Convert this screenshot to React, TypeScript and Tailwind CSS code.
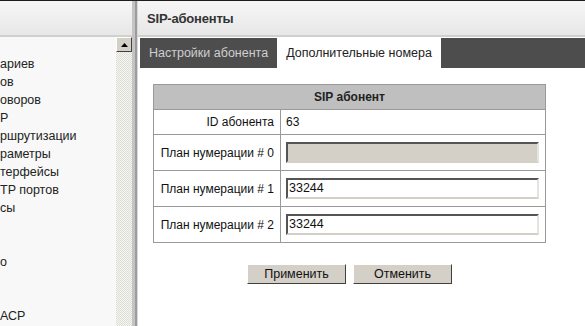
import React from 'react'

const menuItems = [
  'ариев',
  'ов',
  'оворов',
  'P',
  'ршрутизации',
  'раметры',
  'терфейсы',
  'TP портов',
  'сы',
  '',
  '',
  'о',
  '',
  '',
  'АСР',
]

const rows = [
  { label: 'План нумерации # 0', value: '', disabled: true },
  { label: 'План нумерации # 1', value: '33244', disabled: false },
  { label: 'План нумерации # 2', value: '33244', disabled: false },
]

function PaneHeader({ children }: { children?: React.ReactNode }) {
  return (
    <div className="h-[36px] shrink-0 border-t border-t-[#f4f4f4] border-b-2 border-b-[#d0d0d0] bg-gradient-to-b from-[#f6f6f6] to-[#e7e7e7] flex items-center">
      {children}
    </div>
  )
}

export default function App() {
  return (
    <div
      className="w-[585px] h-[326px] overflow-hidden flex flex-col bg-white text-[12px] text-[#111]"
      style={{ fontFamily: '"Liberation Sans", Arial, sans-serif' }}
    >
      <div className="h-[1px] bg-[#1e1e1e] shrink-0" />
      <div className="flex flex-1 min-h-0">
        {/* Left menu pane */}
        <div className="w-[132px] shrink-0 flex flex-col bg-[#f8f8f8]">
          <PaneHeader />
          <div className="flex flex-1 min-h-0">
            <div className="flex-1 overflow-hidden pt-[18px]">
              {menuItems.map((text, i) => (
                <div key={i} className="h-[18px] leading-[18px] whitespace-nowrap text-[12.5px] text-[#222]">
                  {text || '\u00a0'}
                </div>
              ))}
            </div>
            {/* Scrollbar */}
            <div
              className="w-[16px] shrink-0 flex flex-col"
              style={{
                backgroundColor: '#f4f4f0',
                backgroundImage: 'repeating-conic-gradient(#dcdcd6 0% 25%, #f7f7f3 0% 50%)',
                backgroundSize: '2px 2px',
              }}
            >
              <div className="h-[15px] bg-[#d4d0c8] border border-t-white border-l-white border-r-[#404040] border-b-[#404040] flex items-center justify-center">
                <svg width="7" height="4" viewBox="0 0 7 4">
                  <path d="M3.5 0 L7 4 L0 4 Z" fill="#000" />
                </svg>
              </div>
            </div>
          </div>
        </div>

        {/* Divider */}
        <div className="w-[6px] shrink-0 flex">
          <div className="w-[3px] bg-[#c4c4c4]" />
          <div className="w-[2px] bg-[#9c9c9c]" />
          <div className="w-[1px] bg-[#d8d8d8]" />
        </div>

        {/* Right content pane */}
        <div className="flex-1 flex flex-col min-w-0">
          <PaneHeader>
            <span className="pl-[9px] font-bold text-[13px] text-[#333] tracking-[-0.2px]">SIP-абоненты</span>
          </PaneHeader>

          <div className="ml-[2px] mt-[1px] h-[30px] shrink-0 bg-[#4d4d4d] flex">
            <div className="px-[9px] flex items-center text-[#cfcfcf] text-[12.5px]">Настройки абонента</div>
            <div className="px-[9px] flex items-center bg-white text-[#222] text-[12.5px]">Дополнительные номера</div>
          </div>

          <div className="pl-[15px] pt-[16px]">
            <table className="w-[393px] border-collapse border border-[#999]">
              <tbody>
                <tr className="h-[25px] bg-[#bfbfbf]">
                  <th colSpan={2} className="border border-[#999] font-bold text-[12px] text-[#222]">
                    SIP абонент
                  </th>
                </tr>
                <tr className="h-[25px]">
                  <td className="w-[127px] border border-[#999] text-right pr-[6px]">ID абонента</td>
                  <td className="border border-[#999] pl-[5px]">63</td>
                </tr>
                {rows.map(r => (
                  <tr key={r.label} className="h-[36px]">
                    <td className="border border-[#999] text-right pr-[6px] whitespace-nowrap">{r.label}</td>
                    <td className="border border-[#999] pl-[5px]">
                      <div
                        className={`w-[253px] h-[21px] border-2 border-t-[#555] border-l-[#555] border-r-[#e4e4e4] border-b-[#d4d0c8] leading-[17px] text-[12.5px] pl-[1px] ${
                          r.disabled ? 'bg-[#d4d0c8]' : 'bg-white'
                        }`}
                      >
                        {r.value}
                      </div>
                    </td>
                  </tr>
                ))}
              </tbody>
            </table>

            <div className="w-[393px] flex justify-center gap-[7px] mt-[21px]">
              <button
                type="button"
                className="w-[99px] h-[20px] bg-[#d4d0c8] border border-t-white border-l-white border-r-[#404040] border-b-[#404040] text-[12.5px] text-[#111] leading-none"
              >
                Применить
              </button>
              <button
                type="button"
                className="w-[99px] h-[20px] bg-[#d4d0c8] border border-t-white border-l-white border-r-[#404040] border-b-[#404040] text-[12.5px] text-[#111] leading-none"
              >
                Отменить
              </button>
            </div>
          </div>
        </div>
      </div>
    </div>
  )
}
